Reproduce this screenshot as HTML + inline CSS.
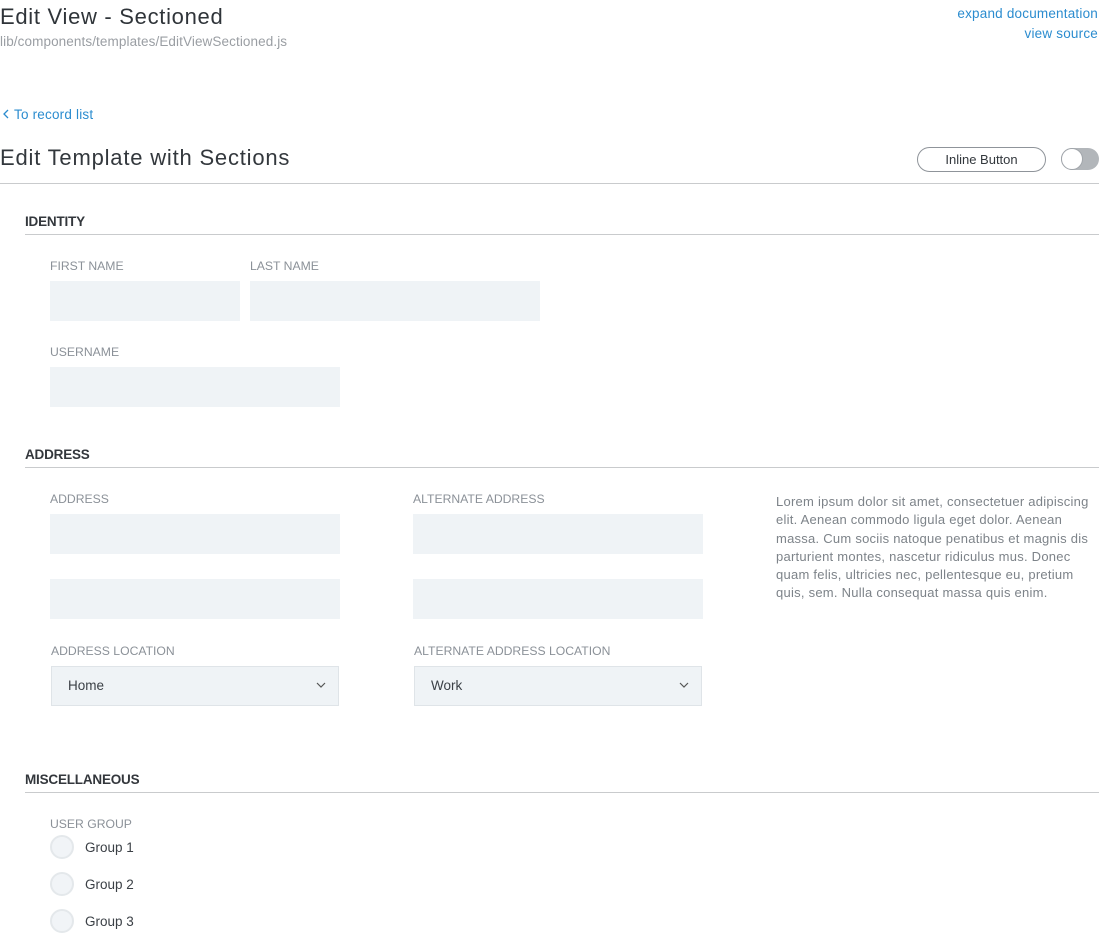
<!DOCTYPE html>
<html><head><style>
*{margin:0;padding:0;box-sizing:border-box}
body{width:1099px;height:927px;overflow:hidden;background:#fff;font-family:"Liberation Sans",sans-serif;position:relative;color:#3b4046}
.a{position:absolute;white-space:nowrap}
.lbl{font-size:12.2px;color:#8b9198}
.sec{font-size:13.5px;color:#33373c;font-weight:bold;letter-spacing:-0.2px}
.line{position:absolute;height:1px;background:#c9cbcd}
.in{position:absolute;background:#eff3f6;height:40px}
.sel{position:absolute;background:#eff3f6;height:40px;border:1px solid #dfe4e8;font-size:13.5px;color:#3b4046;padding:11px 16px}
.chev{position:absolute;right:12px;top:15px}
.rad{position:absolute;width:24px;height:24px;border-radius:50%;background:#f1f4f7;border:2px solid #e4e8eb;left:50px}
.rl{font-size:13.5px;color:#3b4046}
</style></head><body>
<div class="a" style="left:0;top:4px;font-size:22px;letter-spacing:0.7px;color:#2f3439">Edit View - Sectioned</div>
<div class="a" style="left:0;top:34px;font-size:13.5px;letter-spacing:0.1px;color:#9a9ea3">lib/components/templates/EditViewSectioned.js</div>
<div class="a" style="right:1px;top:6px;font-size:13.5px;letter-spacing:0.2px;color:#2b8ccf">expand documentation</div>
<div class="a" style="right:1px;top:26px;font-size:13.5px;letter-spacing:0.2px;color:#2b8ccf">view source</div>
<div class="a" style="left:2px;top:107px;font-size:13.5px;letter-spacing:0.2px;color:#2b8ccf"><svg width="8" height="10" style="margin-right:4px"><path d="M6 1L2 5L6 9" stroke="#2b8ccf" stroke-width="1.3" fill="none"/></svg>To record list</div>
<div class="a" style="left:0;top:145px;font-size:22px;letter-spacing:0.8px;color:#33383d">Edit Template with Sections</div>
<div class="a" style="left:917px;top:147px;width:129px;height:25px;border:1px solid #8f949a;border-radius:13px;font-size:13px;text-align:center;line-height:23px;color:#33383d">Inline Button</div>
<div class="a" style="left:1061px;top:148px;width:38px;height:22px;border-radius:11px;background:#b2b6ba"></div>
<div class="a" style="left:1061px;top:148px;width:22px;height:22px;border-radius:50%;background:#fff;border:1px solid #a0a5aa"></div>
<div class="line" style="left:0;top:183px;width:1099px"></div>

<div class="a sec" style="left:25px;top:214px">IDENTITY</div>
<div class="line" style="left:25px;top:234px;width:1074px"></div>
<div class="a lbl" style="left:50px;top:259px">FIRST NAME</div>
<div class="a lbl" style="left:250px;top:259px">LAST NAME</div>
<div class="in" style="left:50px;top:281px;width:190px"></div>
<div class="in" style="left:250px;top:281px;width:290px"></div>
<div class="a lbl" style="left:50px;top:345px">USERNAME</div>
<div class="in" style="left:50px;top:367px;width:290px"></div>

<div class="a sec" style="left:25px;top:447px">ADDRESS</div>
<div class="line" style="left:25px;top:467px;width:1074px"></div>
<div class="a lbl" style="left:50px;top:492px">ADDRESS</div>
<div class="a lbl" style="left:413px;top:492px">ALTERNATE ADDRESS</div>
<div class="in" style="left:50px;top:514px;width:290px"></div>
<div class="in" style="left:413px;top:514px;width:290px"></div>
<div class="in" style="left:50px;top:579px;width:290px"></div>
<div class="in" style="left:413px;top:579px;width:290px"></div>
<div class="a" style="left:776px;top:493px;width:323px;white-space:normal;font-size:13px;letter-spacing:0.25px;line-height:18.3px;color:#7d8389">Lorem ipsum dolor sit amet, consectetuer adipiscing elit. Aenean commodo ligula eget dolor. Aenean massa. Cum sociis natoque penatibus et magnis dis parturient montes, nascetur ridiculus mus. Donec quam felis, ultricies nec, pellentesque eu, pretium quis, sem. Nulla consequat massa quis enim.</div>
<div class="a lbl" style="left:51px;top:644px">ADDRESS LOCATION</div>
<div class="a lbl" style="left:414px;top:644px">ALTERNATE ADDRESS LOCATION</div>
<div class="sel" style="left:51px;top:666px;width:288px">Home<svg class="chev" width="10" height="7"><path d="M1 1L5 5L9 1" stroke="#555" stroke-width="1.2" fill="none"/></svg></div>
<div class="sel" style="left:414px;top:666px;width:288px">Work<svg class="chev" width="10" height="7"><path d="M1 1L5 5L9 1" stroke="#555" stroke-width="1.2" fill="none"/></svg></div>

<div class="a sec" style="left:25px;top:772px">MISCELLANEOUS</div>
<div class="line" style="left:25px;top:792px;width:1074px"></div>
<div class="a lbl" style="left:50px;top:817px">USER GROUP</div>
<div class="rad" style="top:835px"></div><div class="a rl" style="left:85px;top:840px">Group 1</div>
<div class="rad" style="top:872px"></div><div class="a rl" style="left:85px;top:877px">Group 2</div>
<div class="rad" style="top:909px"></div><div class="a rl" style="left:85px;top:914px">Group 3</div>
</body></html>
